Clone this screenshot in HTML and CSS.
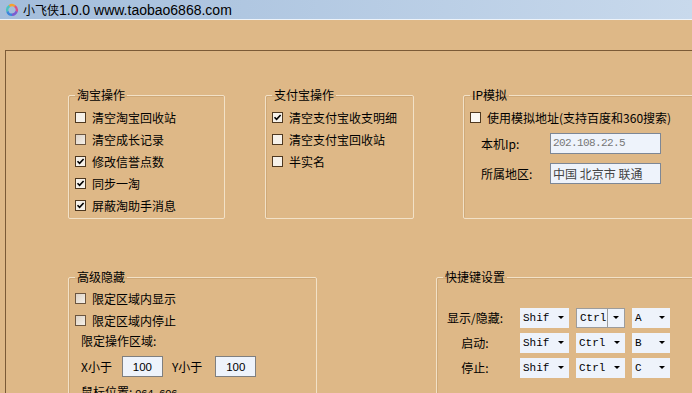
FILE: index.html
```html
<!DOCTYPE html>
<html lang="zh-CN">
<head>
  <meta charset="UTF-8" />
  <meta name="viewport" content="width=device-width, initial-scale=1.0" />
  <title>小飞侠1.0.0</title>
  <link rel="stylesheet" href="styles.css">
</head>
<body>
  <div class="window">
    <!-- 标题栏 -->
    <div class="titlebar">
      <svg class="app-icon" viewBox="0 0 14 14">
        <circle cx="7" cy="7" r="4.8" fill="none" stroke="#f5a030" stroke-width="2.4" stroke-dasharray="6.1 30.2" transform="rotate(-126 7 7)" />
        <circle cx="7" cy="7" r="4.8" fill="none" stroke="#d8508c" stroke-width="2.4" stroke-dasharray="6.1 30.2" transform="rotate(-54 7 7)" />
        <circle cx="7" cy="7" r="4.8" fill="none" stroke="#7a5cd0" stroke-width="2.4" stroke-dasharray="6.1 30.2" transform="rotate(18 7 7)" />
        <circle cx="7" cy="7" r="4.8" fill="none" stroke="#3a86dc" stroke-width="2.4" stroke-dasharray="6.1 30.2" transform="rotate(90 7 7)" />
        <circle cx="7" cy="7" r="4.8" fill="none" stroke="#4cc2c0" stroke-width="2.4" stroke-dasharray="6.1 30.2" transform="rotate(162 7 7)" />
      </svg>
      <span class="title"><span class="cjk">小飞侠</span>1.0.0 www.taobao6868.com</span>
    </div>

    <div class="client">
      <div class="panel">
        <!-- 第一行：淘宝 / 支付宝 / IP -->
        <div class="row">
          <fieldset class="group g-taobao">
            <legend>淘宝操作</legend>
            <div class="check-row"><span class="check"></span>清空淘宝回收站</div>
            <div class="check-row"><span class="check dim"></span>清空成长记录</div>
            <div class="check-row"><span class="check"><svg viewBox="0 0 9 9"><path d="M1.5 4.2 L3.6 6.4 L7.6 2" /></svg></span>修改信誉点数</div>
            <div class="check-row"><span class="check"><svg viewBox="0 0 9 9"><path d="M1.5 4.2 L3.6 6.4 L7.6 2" /></svg></span>同步一淘</div>
            <div class="check-row"><span class="check"><svg viewBox="0 0 9 9"><path d="M1.5 4.2 L3.6 6.4 L7.6 2" /></svg></span>屏蔽淘助手消息</div>
          </fieldset>

          <fieldset class="group g-alipay">
            <legend>支付宝操作</legend>
            <div class="check-row"><span class="check"><svg viewBox="0 0 9 9"><path d="M1.5 4.2 L3.6 6.4 L7.6 2" /></svg></span>清空支付宝收支明细</div>
            <div class="check-row"><span class="check"></span>清空支付宝回收站</div>
            <div class="check-row"><span class="check"></span>半实名</div>
          </fieldset>

          <fieldset class="group g-ip">
            <legend>IP模拟</legend>
            <div class="check-row"><span class="check white"></span>使用模拟地址(支持百度和360搜索)</div>
            <div class="ip-row"><span class="ip-label">本机Ip:</span><span class="ip-input mono">202.108.22.5</span></div>
            <div class="ip-row"><span class="ip-label">所属地区:</span><span class="ip-input dark">中国 北京市 联通</span></div>
          </fieldset>
        </div>

        <!-- 第二行：高级隐藏 / 快捷键 -->
        <div class="row row-bottom">
          <fieldset class="group g-hide">
            <legend>高级隐藏</legend>
            <div class="check-row"><span class="check dim"></span>限定区域内显示</div>
            <div class="check-row"><span class="check dim"></span>限定区域内停止</div>
            <div class="text-row">限定操作区域:</div>
            <div class="xy-row">
              <span>X小于</span><span class="num-input">100</span>
              <span class="y-label">Y小于</span><span class="num-input">100</span>
            </div>
            <div class="text-row">鼠标位置: <span class="mono">964,606</span></div>
          </fieldset>

          <fieldset class="group g-hotkey">
            <legend>快捷键设置</legend>
            <div class="key-row">
              <span class="key-label">显示/隐藏:</span>
              <span class="combo mod"><span class="combo-text">Shif</span><span class="combo-arrow"></span></span>
              <span class="combo mod focus"><span class="combo-text">Ctrl</span><span class="combo-arrow"></span></span>
              <span class="combo key"><span class="combo-text">A</span><span class="combo-arrow"></span></span>
            </div>
            <div class="key-row">
              <span class="key-label">启动:</span>
              <span class="combo mod"><span class="combo-text">Shif</span><span class="combo-arrow"></span></span>
              <span class="combo mod"><span class="combo-text">Ctrl</span><span class="combo-arrow"></span></span>
              <span class="combo key"><span class="combo-text">B</span><span class="combo-arrow"></span></span>
            </div>
            <div class="key-row">
              <span class="key-label">停止:</span>
              <span class="combo mod"><span class="combo-text">Shif</span><span class="combo-arrow"></span></span>
              <span class="combo mod"><span class="combo-text">Ctrl</span><span class="combo-arrow"></span></span>
              <span class="combo key"><span class="combo-text">C</span><span class="combo-arrow"></span></span>
            </div>
          </fieldset>
        </div>
      </div>
    </div>
  </div>
</body>
</html>
```

FILE: styles.css
```css
body {
  margin: 0;
  background-color: #deb887;
  font-family: "Noto Sans CJK SC", sans-serif;
  font-size: 12px;
  color: #000;
}
.window {
  width: 692px;
  height: 393px;
  overflow: hidden;
}
.titlebar {
  height: 19px;
  border-bottom: 1px solid #eef3f9;
  background: linear-gradient(to right, #a3bddb, #c8d9ec);
  display: flex;
  align-items: center;
  padding-left: 5px;
}
.app-icon {
  width: 14px;
  height: 14px;
  margin-right: 4px;
  flex-shrink: 0;
}
.title {
  font-family: "Liberation Sans", sans-serif;
  font-size: 14px;
  white-space: nowrap;
}
.title .cjk {
  font-family: "Noto Sans CJK SC", sans-serif;
  font-size: 12px;
}
.client {
  padding-top: 30px;
  padding-left: 5px;
}
.panel {
  border-top: 1px solid #7b5a36;
  border-left: 1px solid #7b5a36;
  padding: 37px 0 0 62px;
  height: 400px;
  overflow: hidden;
}
.row {
  display: flex;
}
.row-bottom {
  margin-top: 51px;
}
.group {
  margin: 0;
  padding: 4px 6px 0 6px;
  border: 1px solid #f2e1c7;
  border-radius: 2px;
  box-shadow: inset 1px 1px 0 #cfa978;
  min-width: 0;
  box-sizing: border-box;
  flex-shrink: 0;
}
.group legend {
  padding: 0 2px;
  margin-left: 0;
  line-height: 14px;
}
.g-taobao {
  width: 157px;
  height: 131px;
}
.g-alipay {
  width: 149px;
  height: 131px;
  margin-left: 40px;
}
.g-ip {
  width: 290px;
  height: 131px;
  margin-left: 49px;
}
.g-hide {
  width: 249px;
  height: 170px;
  padding-top: 3px;
}
.g-hotkey {
  width: 290px;
  height: 170px;
  margin-left: 119px;
  padding-top: 21px;
}
.check-row {
  display: flex;
  align-items: center;
  height: 22px;
  white-space: nowrap;
}
.check {
  width: 11px;
  height: 11px;
  box-sizing: border-box;
  border: 1px solid #4e3820;
  background-color: #f6f1e9;
  margin-right: 6px;
  flex-shrink: 0;
  display: flex;
}
.check.dim {
  background: linear-gradient(135deg, #ded3c6, #f4efe8);
  border-color: #6b5540;
}
.check.white {
  background-color: #fbf8f3;
}
.check svg {
  width: 9px;
  height: 9px;
}
.check path {
  fill: none;
  stroke: #000;
  stroke-width: 1.6;
}
.ip-row {
  display: flex;
  align-items: center;
  height: 30px;
  padding-left: 11px;
}
.ip-row + .ip-row {
  height: 31px;
}
.ip-label {
  width: 69px;
}
.ip-input {
  width: 111px;
  height: 21px;
  box-sizing: border-box;
  border: 1px solid #7d8796;
  background-color: #eef3fb;
  display: flex;
  align-items: center;
  padding-left: 2px;
  white-space: nowrap;
}
.ip-input.mono {
  color: #777;
}
.ip-input.dark {
  color: #444;
}
.mono {
  font-family: "Liberation Mono", monospace;
  font-size: 11px;
  letter-spacing: -0.6px;
}
.text-row {
  height: 20px;
  line-height: 20px;
  padding-left: 6px;
  white-space: nowrap;
}
.xy-row {
  display: flex;
  align-items: center;
  height: 31px;
  padding-left: 6px;
}
.num-input {
  width: 41px;
  height: 21px;
  box-sizing: border-box;
  border: 1px solid #7f7f7f;
  background-color: #eef3fb;
  margin-left: 10px;
  font-family: "Liberation Sans", sans-serif;
  font-size: 11.5px;
  display: flex;
  align-items: center;
  justify-content: center;
}
.y-label {
  margin-left: 9px;
}
.num-input + .y-label + .num-input {
  margin-left: 13px;
}
.key-row {
  display: flex;
  align-items: center;
  height: 25px;
}
.key-label {
  width: 64px;
  text-align: center;
  margin-right: 13px;
  white-space: nowrap;
}
.combo {
  display: flex;
  align-items: center;
  height: 20px;
  box-sizing: border-box;
  background-color: #eef3fb;
  margin-right: 7px;
  font-family: "Liberation Mono", monospace;
  font-size: 11px;
}
.combo.mod {
  width: 49px;
}
.combo.key {
  width: 38px;
}
.combo.focus {
  border: 1px solid #9c9c9c;
}
.combo-text {
  flex: 1;
  padding-left: 3px;
}
.combo-arrow {
  width: 16px;
  height: 100%;
  display: flex;
  align-items: center;
  justify-content: center;
}
.combo-arrow::after {
  content: "";
  border-left: 3px solid transparent;
  border-right: 3px solid transparent;
  border-top: 3px solid #000;
}
.combo.focus .combo-arrow {
  border-left: 1px solid #9c9c9c;
}
```
